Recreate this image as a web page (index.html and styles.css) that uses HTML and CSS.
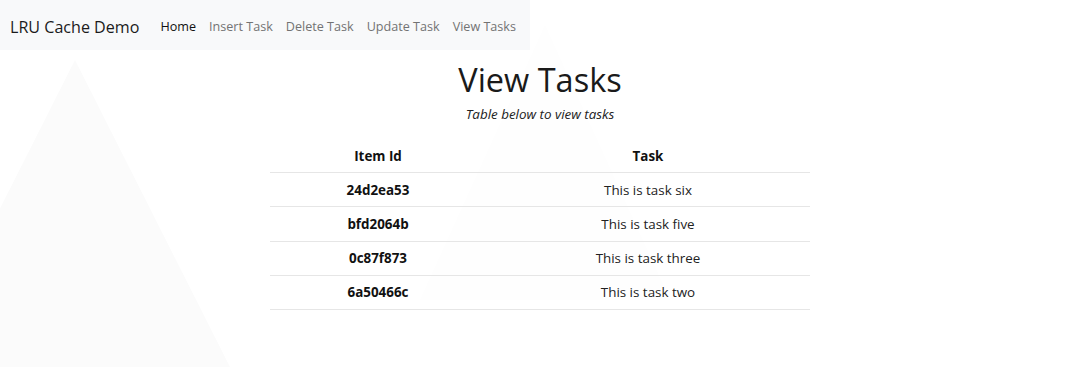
FILE: index.html
```html
<!DOCTYPE html>
<html lang="en">
<head>
  <meta charset="UTF-8">
  <meta name="viewport" content="width=device-width, initial-scale=1">
  <title>LRU Cache Demo</title>
  <link rel="stylesheet" href="styles.css">
</head>
<body>

<!-- faint background shapes -->
<svg class="backdrop" width="1080" height="367" viewBox="0 0 1080 367" aria-hidden="true">
  <polygon points="75,60 -80,367 230,367" fill="#fbfbfb" />
  <polygon points="545,25 420,300 670,300" fill="#fefefe" />
</svg>

<nav class="navbar">
  <a href="#" class="navbar-brand">LRU Cache Demo</a>
  <ul class="nav-links">
    <li><a href="#" class="nav-link active">Home</a></li>
    <li><a href="#" class="nav-link">Insert Task</a></li>
    <li><a href="#" class="nav-link">Delete Task</a></li>
    <li><a href="#" class="nav-link">Update Task</a></li>
    <li><a href="#" class="nav-link">View Tasks</a></li>
  </ul>
</nav>

<main class="content">
  <h1 class="title">View Tasks</h1>
  <p class="lead"><em>Table below to view tasks</em></p>

  <table class="tasks">
    <thead>
      <tr>
        <th class="col-id">Item Id</th>
        <th class="col-task">Task</th>
      </tr>
    </thead>
    <tbody>
      <tr><th>24d2ea53</th><td>This is task six</td></tr>
      <tr><th>bfd2064b</th><td>This is task five</td></tr>
      <tr><th>0c87f873</th><td>This is task three</td></tr>
      <tr><th>6a50466c</th><td>This is task two</td></tr>
    </tbody>
  </table>
</main>

</body>
</html>
```

FILE: styles.css
```css
html {
  background: #fff;
}

body {
  margin: 0;
  padding: 0;
  color: #212529;
  font-family: "Open Sans", "Noto Sans", sans-serif;
}

/* Decorative shapes sit behind everything */
.backdrop {
  position: absolute;
  top: 0;
  left: 0;
  z-index: -1;
}

.navbar {
  display: flex;
  align-items: center;
  width: 530px;
  height: 50px;
  box-sizing: border-box;
  padding: 3px 0 0 10px;
  background-color: #f8f9fa;
  white-space: nowrap;
}

.navbar-brand {
  font-size: 16.1px;
  color: #1b1b1b;
  text-decoration: none;
  margin-right: 14.5px;
}

.nav-links {
  display: flex;
  list-style: none;
  margin: 0;
  padding: 0;
}

.nav-link {
  display: block;
  padding: 0 6.5px;
  font-size: 12.6px;
  color: #737373;
  text-decoration: none;
}

.nav-link.active {
  color: #111;
}

.content {
  text-align: center;
}

.title {
  margin: 10px 0 0;
  font-size: 32.5px;
  font-weight: 400;
  line-height: 1.2;
  color: #1a1a1a;
}

.lead {
  margin: 5px 0 0;
  font-size: 13.4px;
  line-height: 20px;
  color: #222;
}

.tasks {
  width: 540px;
  margin: 15px auto 0;
  border-collapse: collapse;
  font-size: 13.4px;
}

.tasks th,
.tasks td {
  padding: 6.6px 0;
  line-height: 20px;
  border-bottom: 1px solid #e6e6e6;
  text-align: center;
}

.tasks th {
  font-weight: 700;
  color: #111;
}

.tasks td {
  font-weight: 400;
  color: #222;
}

.col-id {
  width: 40%;
}

.col-task {
  width: 60%;
}
```
